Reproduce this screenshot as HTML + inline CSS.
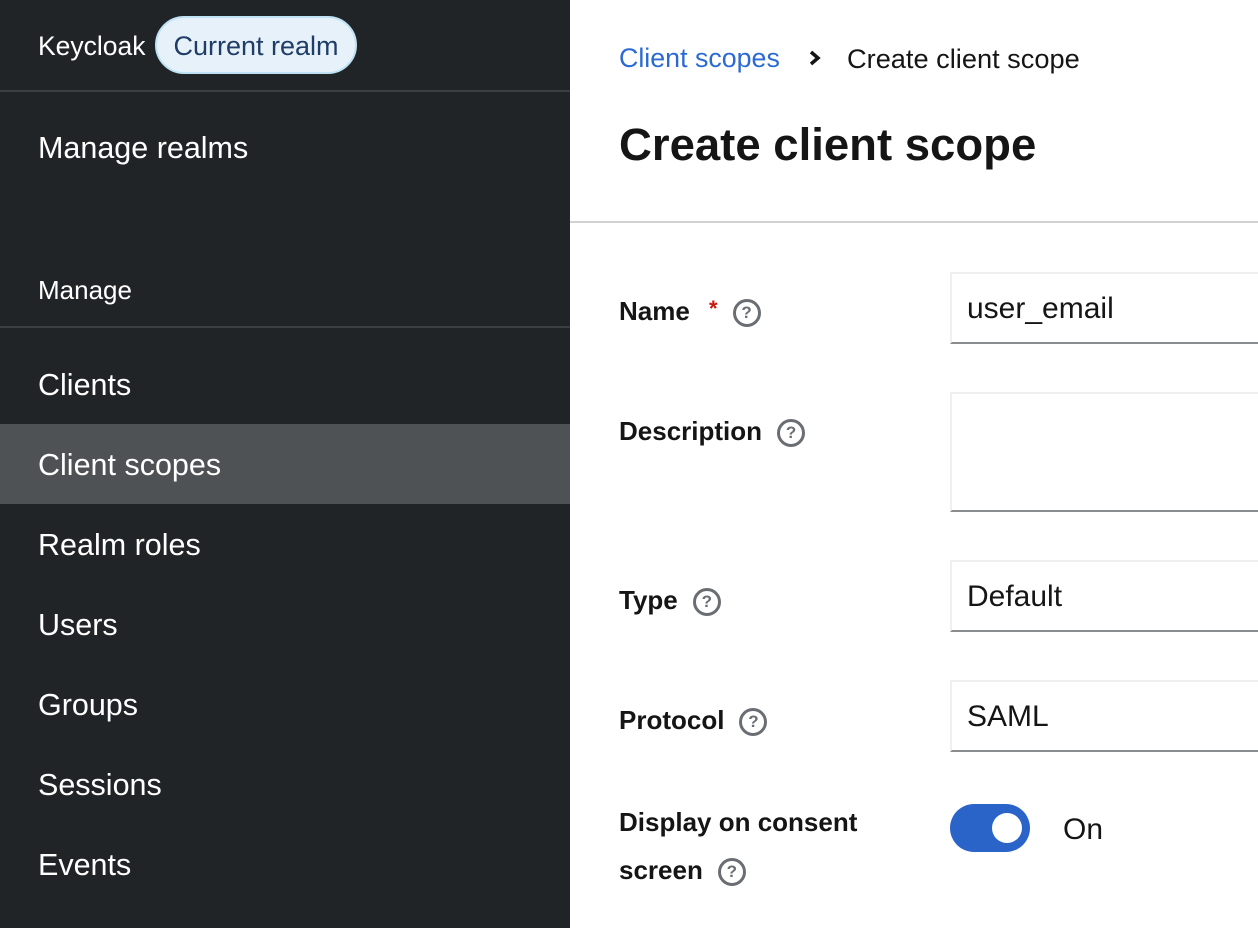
<!DOCTYPE html>
<html><head><meta charset="utf-8"><style>
*{margin:0;padding:0;box-sizing:border-box}
body{width:1258px;height:928px;overflow:hidden;font-family:"Liberation Sans",sans-serif;background:#fff;position:relative}
.sb{position:absolute;left:0;top:0;width:570px;height:928px;background:#212427;color:#fff}
.a{position:absolute;white-space:nowrap}
.hr{position:absolute;left:0;width:570px;height:2px;background:#3c3f42}
.item{position:absolute;left:0;width:570px;height:80px;padding-left:38px;line-height:82px;font-size:30.5px;color:#fff}
.act{background:#4f5255}
.lbl{position:absolute;left:619px;font-size:26px;font-weight:bold;color:#151515;white-space:nowrap}
.q{display:inline-block;width:28px;height:28px;border:3px solid #6a6e73;border-radius:50%;color:#6a6e73;font-size:17px;font-weight:bold;text-align:center;line-height:22px;vertical-align:middle;margin-left:15px}
.in{position:absolute;left:950px;width:320px;border:2px solid #f0f0f0;border-bottom:2px solid #8a8d90;border-right:none;font-size:30px;color:#151515;padding-left:15px}
</style></head><body>
<div class="sb">
  <div class="a" style="left:38px;top:31px;font-size:26.5px">Keycloak</div>
  <div class="a" style="left:155px;top:16px;width:202px;height:58px;border-radius:29px;background:#e7f1fa;border:2px solid #bee1f4;color:#1f3d66;font-size:27px;line-height:56px;text-align:center">Current realm</div>
  <div class="hr" style="top:90px"></div>
  <div class="a" style="left:38px;top:131px;font-size:30.5px">Manage realms</div>
  <div class="a" style="left:38px;top:275px;font-size:26px">Manage</div>
  <div class="hr" style="top:326px"></div>
  <div class="item" style="top:344px">Clients</div>
  <div class="item act" style="top:424px">Client scopes</div>
  <div class="item" style="top:504px">Realm roles</div>
  <div class="item" style="top:584px">Users</div>
  <div class="item" style="top:664px">Groups</div>
  <div class="item" style="top:744px">Sessions</div>
  <div class="item" style="top:824px">Events</div>
</div>
<div class="a" style="left:619px;top:43px;font-size:26.8px;color:#2b6bd1">Client scopes</div>
<svg class="a" style="left:808px;top:49px" width="14" height="18" viewBox="0 0 14 18"><path d="M3 3l7 6-7 6" fill="none" stroke="#151515" stroke-width="3.5"/></svg>
<div class="a" style="left:847px;top:43px;font-size:27.2px;color:#151515">Create client scope</div>
<div class="a" style="left:619px;top:119px;font-size:45.5px;font-weight:bold;color:#151515">Create client scope</div>
<div class="a" style="left:570px;top:221px;width:688px;height:2px;background:#d2d2d2"></div>

<div class="lbl" style="top:296px">Name <span style="color:#c9190b;margin-left:12px;font-size:22px;vertical-align:top">*</span><span class="q">?</span></div>
<div class="in" style="top:272px;height:72px;line-height:70px">user_email</div>

<div class="lbl" style="top:416px">Description<span class="q">?</span></div>
<div class="in" style="top:392px;height:120px"></div>

<div class="lbl" style="top:585px">Type<span class="q">?</span></div>
<div class="in" style="top:560px;height:72px;line-height:70px">Default</div>

<div class="lbl" style="top:705px">Protocol<span class="q">?</span></div>
<div class="in" style="top:680px;height:72px;line-height:70px">SAML</div>

<div class="lbl" style="top:807px">Display on consent</div>
<div class="lbl" style="top:855px">screen<span class="q">?</span></div>
<div class="a" style="left:950px;top:804px;width:80px;height:48px;border-radius:24px;background:#2b64c9"></div>
<div class="a" style="left:992px;top:813px;width:30px;height:30px;border-radius:50%;background:#fff"></div>
<div class="a" style="left:1063px;top:813px;font-size:30px;color:#151515">On</div>
</body></html>
